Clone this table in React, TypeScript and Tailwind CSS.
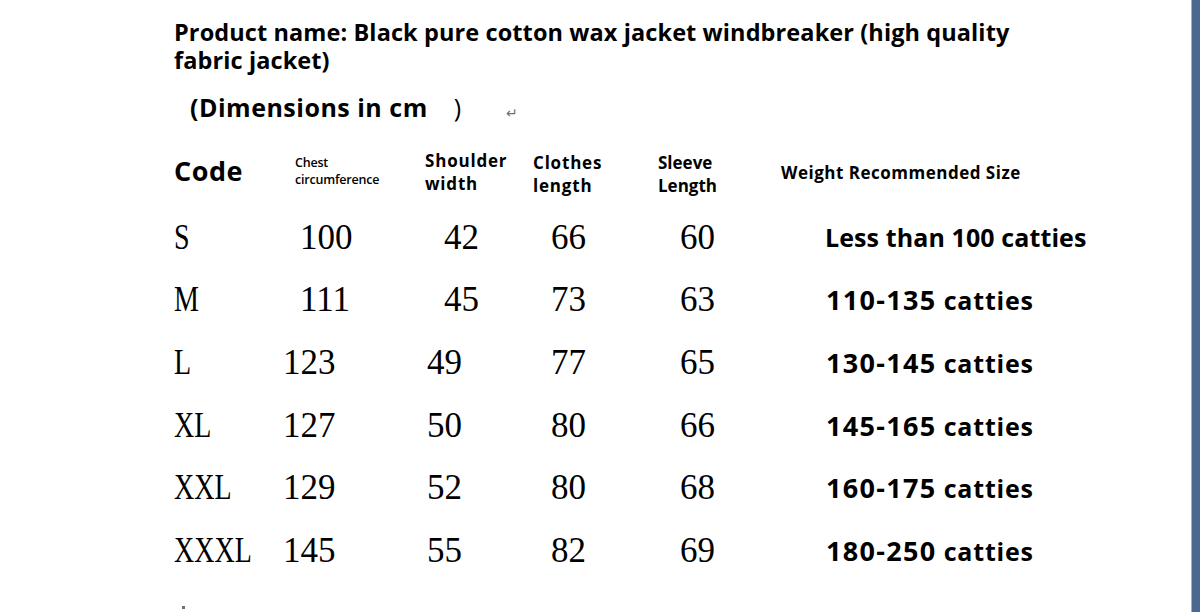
import React from "react";

const rows = [
  { code: "S", chest: "100", shoulder: "42", clothes: "66", sleeve: "60", range: "", weight: "Less than 100 catties", indent: true },
  { code: "M", chest: "111", shoulder: "45", clothes: "73", sleeve: "63", range: "110-135", weight: "catties", indent: true },
  { code: "L", chest: "123", shoulder: "49", clothes: "77", sleeve: "65", range: "130-145", weight: "catties", indent: false },
  { code: "XL", chest: "127", shoulder: "50", clothes: "80", sleeve: "66", range: "145-165", weight: "catties", indent: false },
  { code: "XXL", chest: "129", shoulder: "52", clothes: "80", sleeve: "68", range: "160-175", weight: "catties", indent: false },
  { code: "XXXL", chest: "145", shoulder: "55", clothes: "82", sleeve: "69", range: "180-250", weight: "catties", indent: false },
];

const sans = "font-['Open_Sans','Lato',sans-serif]";
const serif = "font-['Liberation_Serif',serif]";

export default function App() {
  return (
    <div className="flex h-[612px] w-[1200px] overflow-hidden bg-white text-black">
      <div className="flex-1 pl-[174px] pt-[18px]">
        <div className={`${sans} text-[23.5px] font-bold leading-[28px] tracking-[0.1px]`}>
          Product name: Black pure cotton wax jacket windbreaker (high quality
          <br />
          fabric jacket)
        </div>
        <div className={`${sans} mt-[17px] flex items-end pl-[16px] text-[25px] font-bold leading-[32px] tracking-[0.5px]`}>
          <span>(Dimensions in cm</span>
          <span className="ml-[26px] font-normal">)</span>
          <span className="mb-[-6px] ml-[44px] text-[14px] font-normal text-gray-500">↵</span>
        </div>

        <div className={`${sans} mt-[22px] grid grid-cols-[121px_130px_108px_125px_123px_1fr] items-center font-bold`}>
          <div className="text-[27px] tracking-[0.5px]">Code</div>
          <div className="text-[12.5px] font-semibold leading-[17px] tracking-[-0.2px]">
            Chest
            <br />
            circumference
          </div>
          <div className="mt-[2px] text-[17px] leading-[23px] tracking-[0.8px]">
            Shoulder
            <br />
            width
          </div>
          <div className="mt-[6px] text-[17px] leading-[23px] tracking-[0.8px]">
            Clothes
            <br />
            length
          </div>
          <div className="mt-[6px] text-[17px] leading-[23px]">
            Sleeve
            <br />
            Length
          </div>
          <div className="mt-[4px] text-[17px] tracking-[0.5px]">Weight Recommended Size</div>
        </div>

        <div className="mt-[9px] flex flex-col">
          {rows.map((r) => (
            <div
              key={r.code}
              className="grid h-[62.6px] grid-cols-[109px_144px_124px_129px_145px_1fr] items-center"
            >
              <div className={`${serif} text-[35px] leading-none`}>
                <span className="inline-block origin-left scale-x-80">{r.code}</span>
              </div>
              <div className={`${serif} text-[35px] leading-none ${r.indent ? "pl-[17px]" : ""}`}>{r.chest}</div>
              <div className={`${serif} text-[35px] leading-none ${r.indent ? "pl-[17px]" : ""}`}>{r.shoulder}</div>
              <div className={`${serif} text-[35px] leading-none`}>{r.clothes}</div>
              <div className={`${serif} text-[35px] leading-none`}>{r.sleeve}</div>
              {r.range ? (
                <div className={`${sans} pl-[1px] text-[25px] font-bold leading-none tracking-[0.8px]`}>
                  <span className="text-[27px] tracking-[1.3px]">{r.range}</span> {r.weight}
                </div>
              ) : (
                <div className={`${sans} text-[25px] font-bold leading-none tracking-[0.1px]`}>{r.weight}</div>
              )}
            </div>
          ))}
        </div>
        <div className="ml-[8px] mt-[24px] h-[3px] w-[3px] bg-gray-500" />
      </div>
      <div className="flex w-[9px] shrink-0">
        <div className="w-[1px] bg-[#9fb0c6]" />
        <div className="flex-1 bg-[#4b6890]" />
      </div>
    </div>
  );
}
